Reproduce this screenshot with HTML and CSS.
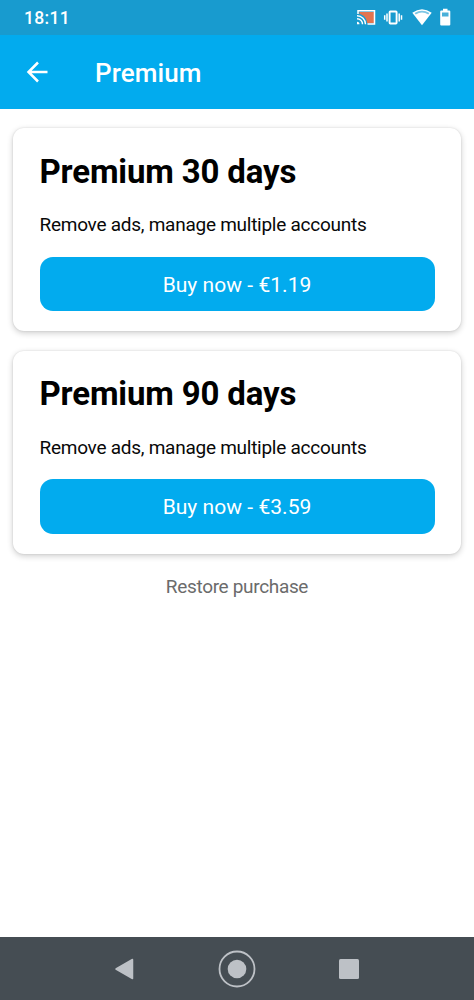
FILE: index.html
```html
<!DOCTYPE html>
<html lang="en">
<head>
<meta charset="utf-8">
<title>Premium</title>
<link rel="stylesheet" href="styles.css">
</head>
<body>
<div class="screen">
  <div class="status">
    <span class="clock">18:11</span>
    <svg class="status-icons" width="100" height="20" viewBox="356 8 100 20" fill="none">
      <path d="M359.500 12H374V23H367C367 18 363 14.500 359.500 14Z" fill="#e2744f"/>
      <path d="M358 14V10.800H374.500V24H367.500" stroke="#fff" stroke-width="1.500"/>
      <path d="M357 15.700A8.500 8.500 0 0 1 365.500 24.200M357 18.700A5.500 5.500 0 0 1 362.500 24.200" stroke="#fff" stroke-width="1.400"/>
      <path d="M357 21.800A2.500 2.500 0 0 1 359.500 24.300H357Z" fill="#fff"/>
      <rect x="389.600" y="11.500" width="7" height="12" rx=".7" stroke="#fff" stroke-width="1.900"/>
      <path d="M387 13.500V21.500M384.700 15.300V19.700M399.200 13.500V21.500M401.500 15.300V19.700" stroke="#fff" stroke-width="1.500"/>
      <path d="M412.300 12.800Q422 5.600 431.700 12.800L422 25.300Z" fill="#fff"/>
      <path d="M414.600 13.100Q422 8.200 429.400 13.100L428.300 14.500Q422 10.400 415.700 14.500Z" fill="#7cc6e4"/>
      <path d="M443 8.700H447.500V10.500H449.200Q450.300 10.500 450.300 11.600V24.400Q450.300 25.500 449.200 25.500H441.300Q440.200 25.500 440.200 24.400V11.600Q440.200 10.500 441.300 10.500H443Z" fill="#fff"/>
      <rect x="442" y="12.500" width="6.500" height="4" fill="#4ab0d9"/>
    </svg>
  </div>
  <header class="bar">
    <svg class="back" width="24" height="24" viewBox="0 0 24 24" fill="none" stroke="#fff" stroke-width="2.500"><path d="M23.500 12H4.500M14 2.500L4.500 12L14 21.500"/></svg>
    <h1 class="bar-title">Premium</h1>
  </header>
  <main class="content">
    <section class="card">
      <h2 class="card-title">Premium 30 days</h2>
      <p class="card-text">Remove ads, manage multiple accounts</p>
      <button class="buy">Buy now - €1.19</button>
    </section>
    <section class="card">
      <h2 class="card-title">Premium 90 days</h2>
      <p class="card-text">Remove ads, manage multiple accounts</p>
      <button class="buy">Buy now - €3.59</button>
    </section>
    <a class="restore">Restore purchase</a>
  </main>
  <nav class="nav">
    <svg width="40" height="40" viewBox="0 0 40 40"><path d="M11 20L27.500 10.500V29.500Z" fill="#bdc1c6" stroke="#bdc1c6" stroke-width="1.500" stroke-linejoin="round"/></svg>
    <svg width="40" height="40" viewBox="0 0 40 40"><circle cx="20" cy="20" r="17.500" fill="none" stroke="#bdc1c6" stroke-width="1.800"/><circle cx="20" cy="20" r="9.300" fill="#bdc1c6"/></svg>
    <svg width="40" height="40" viewBox="0 0 40 40"><rect x="10" y="10" width="20" height="20" rx="1.500" fill="#bdc1c6"/></svg>
  </nav>
</div>
</body>
</html>
```
FILE: styles.css
```css
* {
  box-sizing: border-box;
}

body {
  margin: 0;
  font-family: Roboto, sans-serif;
  background: #fff;
}

.screen {
  display: flex;
  flex-direction: column;
  width: 474px;
  height: 1000px;
  overflow: hidden;
}

.status {
  display: flex;
  align-items: center;
  justify-content: space-between;
  height: 35px;
  padding: 0 18px 0 24px;
  background: #189bcf;
  color: #fff;
}

.clock {
  padding-top: 1px;
  font-size: 17.5px;
  font-weight: 500;
  letter-spacing: 0.3px;
}

.status-icons {
  display: block;
}

.bar {
  display: flex;
  align-items: center;
  height: 73.5px;
  padding-left: 24px;
  background: #02abee;
  color: #fff;
}

.back {
  display: block;
}

.bar-title {
  margin: 0 0 0 47px;
  padding-top: 2px;
  font-size: 26px;
  line-height: 30px;
  font-weight: 500;
  letter-spacing: 0.1px;
}

.content {
  display: flex;
  flex: 1;
  flex-direction: column;
  align-items: center;
  padding-top: 19.5px;
}

.card {
  width: 448px;
  height: 203px;
  margin-bottom: 19.5px;
  padding: 23.5px 26.5px 0;
  border-radius: 11px;
  background: #fff;
  box-shadow: 0 2px 6px rgba(0, 0, 0, 0.2), 0 0 2px rgba(0, 0, 0, 0.12);
}

.card-title {
  margin: 0;
  font-size: 33px;
  line-height: 40px;
  font-weight: 700;
  letter-spacing: -0.15px;
  color: #000;
}

.card-text {
  margin: 21.5px 0 0;
  font-size: 19px;
  line-height: 24px;
  letter-spacing: -0.26px;
  color: #080808;
}

.buy {
  display: block;
  width: 395px;
  height: 54.5px;
  margin-top: 19.5px;
  padding: 2px 0 0;
  border: 0;
  border-radius: 13px;
  background: #02abee;
  color: #fff;
  font-family: inherit;
  font-size: 21px;
  letter-spacing: 0.04px;
}

.restore {
  margin-top: 1.5px;
  font-size: 19px;
  line-height: 24px;
  letter-spacing: -0.33px;
  color: #6b6b6b;
}

.nav {
  display: flex;
  align-items: center;
  justify-content: center;
  gap: 72px;
  height: 63px;
  background: #454d53;
}
```
